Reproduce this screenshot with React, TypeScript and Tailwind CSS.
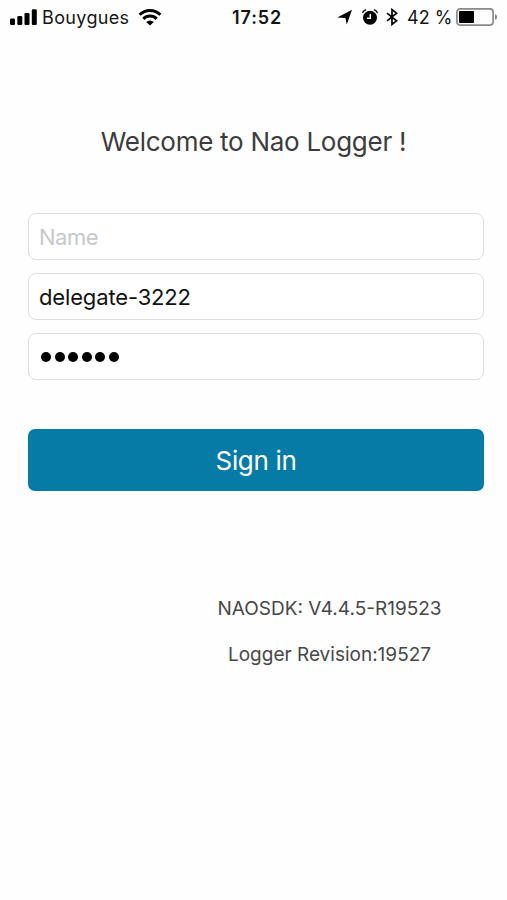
import React from 'react';

type FieldProps = {
  children: React.ReactNode;
};

function Field({ children }: FieldProps) {
  return (
    <div className="flex h-[47px] items-center rounded-[8px] border-[1.5px] border-[#dedede] bg-white pl-[10px] text-[22px] leading-none">
      {children}
    </div>
  );
}

function SignalIcon() {
  return (
    <svg className="h-4 w-[27px]" viewBox="0 0 27 16">
      <rect x="0" y="9.5" width="5" height="6.5" rx="1.2" />
      <rect x="7.3" y="7" width="5" height="9" rx="1.2" />
      <rect x="14.5" y="4" width="5" height="12" rx="1.2" />
      <rect x="21.8" y="0.3" width="5" height="15.7" rx="1.2" />
    </svg>
  );
}

function WifiIcon() {
  return (
    <svg className="h-[17px] w-6" viewBox="0 0 24 17" fill="none" stroke="black" strokeWidth="3">
      <path d="M1.6 5.8a14.8 14.8 0 0 1 20.8 0" />
      <path d="M5.3 9.9a9.4 9.4 0 0 1 13.4 0" />
      <path d="M12 16.4L8.2 13a5.4 5.4 0 0 1 7.6 0z" fill="black" stroke="none" />
    </svg>
  );
}

function LocationIcon() {
  return (
    <svg className="h-4 w-4" viewBox="0 0 16 16">
      <path d="M15 0.8L9.8 15.4L8.4 8.9L0.3 8.6z" />
    </svg>
  );
}

function AlarmIcon() {
  return (
    <svg className="h-4 w-4" viewBox="0 0 16 16" fill="none" stroke="black" strokeLinecap="round">
      <circle cx="8" cy="8.8" r="7" fill="black" stroke="none" />
      <path d="M0.8 3.4Q1.8 1.6 3.6 0.9M15.2 3.4Q14.2 1.6 12.4 0.9" strokeWidth="1.4" />
      <path d="M8.3 5.4v3.9H5.6" stroke="white" strokeWidth="1.5" />
    </svg>
  );
}

function BluetoothIcon() {
  return (
    <svg className="h-[18px] w-3" viewBox="0 0 12 18" fill="none" stroke="black" strokeWidth="1.7">
      <path d="M1 5.2l9.6 7.6L6 16.4V1.6l4.6 3.6L1 12.8" />
    </svg>
  );
}

function BatteryIcon() {
  return (
    <svg className="h-[18px] w-[42px]" viewBox="0 0 42 18">
      <rect x="0.9" y="0.9" width="36.2" height="16.2" rx="3" fill="none" stroke="#8a8a8a" strokeWidth="1.7" />
      <rect x="3" y="3" width="15" height="12" rx="0.8" />
      <path d="M39 6q2.2 1 2.2 3T39 12z" fill="#8a8a8a" />
    </svg>
  );
}

function StatusBar() {
  return (
    <header className="flex h-[34px] items-center whitespace-nowrap pl-[10px] text-[18px] leading-none text-[#151515]">
      <div className="flex w-[222px] items-center">
        <SignalIcon />
        <span className="ml-[5px] w-[96px] pt-[2px] tracking-[0.35px]">Bouygues</span>
        <WifiIcon />
      </div>
      <span className="w-[105px] pt-[2px] font-semibold tracking-[0.9px]">17:52</span>
      <LocationIcon />
      <span className="ml-[9px] flex">
        <AlarmIcon />
      </span>
      <span className="ml-[8px] flex">
        <BluetoothIcon />
      </span>
      <span className="ml-[9px] w-[49px] pt-[2px]">42 %</span>
      <BatteryIcon />
    </header>
  );
}

export default function App() {
  return (
    <div className="h-[900px] w-full overflow-hidden bg-[#fefefe] font-['Inter',sans-serif]">
      <StatusBar />

      <h1 className="mt-[92px] text-center text-[26px] leading-[32px] tracking-[-0.27px] text-[#3c3c3c]">
        Welcome to Nao Logger !
      </h1>

      {/* Login form */}
      <main className="mt-[55px] pl-7 pr-[23px]">
        <div className="flex flex-col gap-[13px]">
          <Field>
            <span className="tracking-[-0.5px] text-[#c8c8ca]">Name</span>
          </Field>
          <Field>
            <span className="tracking-[-0.15px] text-[#111]">delegate-3222</span>
          </Field>
          <Field>
            <span className="ml-[2px] flex gap-[3.6px]">
              {[0, 1, 2, 3, 4, 5].map((dot) => (
                <span key={dot} className="size-[10px] rounded-full bg-black" />
              ))}
            </span>
          </Field>
        </div>

        <button className="mt-[49px] flex h-[62px] w-full items-center justify-center rounded-[7px] bg-[#057ba6] pt-px text-[26px] tracking-[-0.35px] text-white">
          Sign in
        </button>
      </main>

      {/* Version info */}
      <footer className="ml-[152px] mt-[106px] flex flex-col items-center gap-[22px] text-[19px] leading-6 text-[#484848]">
        <p>NAOSDK: V4.4.5-R19523</p>
        <p>Logger Revision:19527</p>
      </footer>
    </div>
  );
}
